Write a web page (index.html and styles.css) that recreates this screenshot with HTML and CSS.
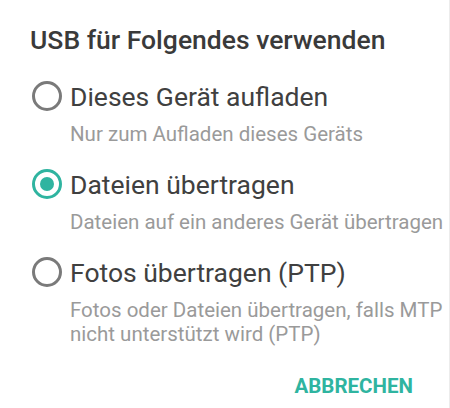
FILE: index.html
```html
<!DOCTYPE html>
<html lang="de">
<head>
<meta charset="utf-8">
<link rel="stylesheet" href="styles.css">
</head>
<body>
<div class="dialog">
  <div class="title">USB für Folgendes verwenden</div>
  <div class="options">
    <div class="option">
      <span class="radio"></span>
      <div class="label">Dieses Gerät aufladen</div>
      <div class="desc">Nur zum Aufladen dieses Geräts</div>
    </div>
    <div class="option">
      <span class="radio checked"></span>
      <div class="label">Dateien übertragen</div>
      <div class="desc">Dateien auf ein anderes Gerät übertragen</div>
    </div>
    <div class="option">
      <span class="radio"></span>
      <div class="label">Fotos übertragen (PTP)</div>
      <div class="desc">Fotos oder Dateien übertragen, falls MTP<br>nicht unterstützt wird (PTP)</div>
    </div>
  </div>
  <div class="actions">
    <span class="button">ABBRECHEN</span>
  </div>
</div>
</body>
</html>
```
FILE: styles.css
```css
html, body {
  margin: 0;
  padding: 0;
  background: #ffffff;
}
.dialog {
  box-sizing: border-box;
  width: 450px;
  height: 408px;
  padding-top: 24px;
  border-right: 1px solid #ececec;
  font-family: Roboto, "Liberation Sans", sans-serif;
}
.title {
  margin-left: 30px;
  font-size: 26.5px;
  font-weight: 500;
  line-height: 32px;
  color: #3a3a3a;
  white-space: nowrap;
}
.options {
  display: flex;
  flex-direction: column;
  gap: 23px;
  margin-top: 25px;
}
.option {
  display: grid;
  grid-template-columns: 70px 1fr;
  align-items: start;
}
.radio {
  box-sizing: border-box;
  width: 30px;
  height: 30px;
  margin-left: 32px;
  border: 3px solid #7a7a7a;
  border-radius: 50%;
  display: flex;
  align-items: center;
  justify-content: center;
}
.radio.checked {
  border-color: #2fb4a0;
}
.radio.checked::after {
  content: "";
  width: 14px;
  height: 14px;
  border-radius: 50%;
  background: #2fb4a0;
}
.label {
  font-size: 26.5px;
  line-height: 32px;
  color: #404040;
  white-space: nowrap;
}
.desc {
  grid-column: 2;
  margin-top: 9px;
  font-size: 20.5px;
  line-height: 24px;
  color: #9a9a9a;
  white-space: nowrap;
}
.actions {
  display: flex;
  justify-content: flex-end;
  margin-top: 27px;
  padding-right: 36px;
}
.button {
  font-size: 20.5px;
  font-weight: 700;
  line-height: 26px;
  color: #2fb4a0;
}
```
